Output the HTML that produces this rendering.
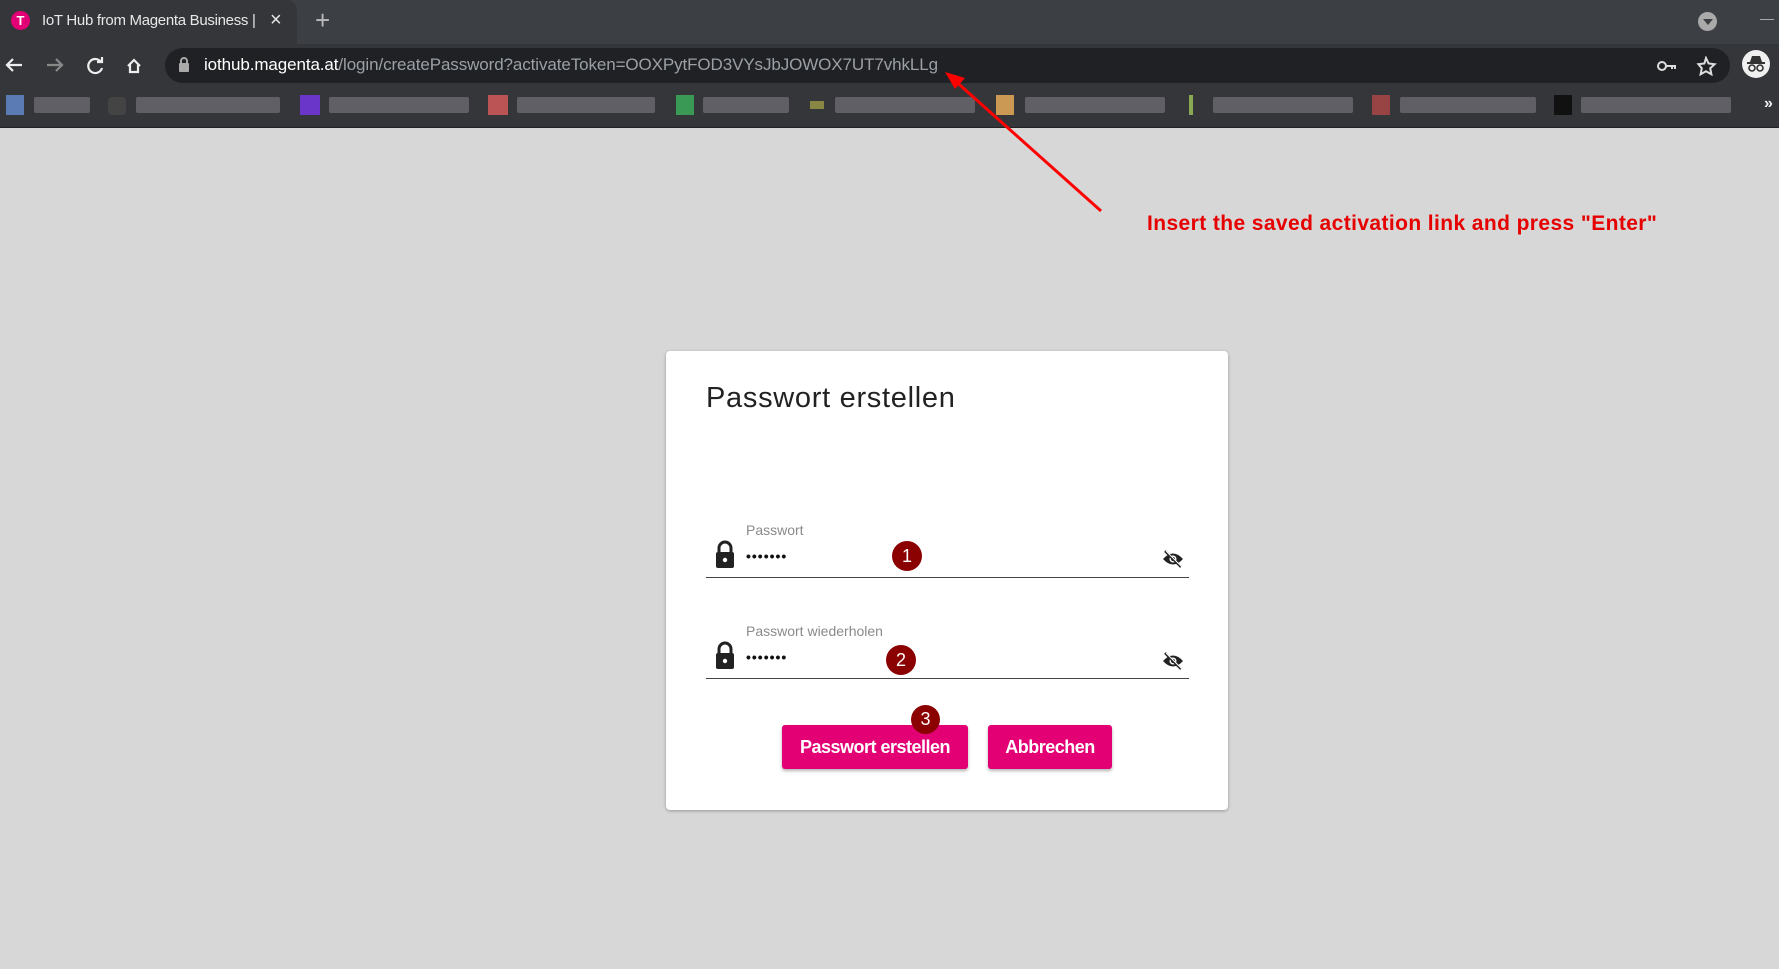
<!DOCTYPE html>
<html><head><meta charset="utf-8"><style>
*{margin:0;padding:0;box-sizing:border-box}
body{width:1779px;height:969px;background:#d7d7d7;font-family:"Liberation Sans",sans-serif;position:relative;overflow:hidden}
.abs{position:absolute}
.frame{left:0;top:0;width:1779px;height:44px;background:#3c3f43}
.tab{left:0;top:0;width:297px;height:44px;background:#35363a;border-radius:0 10px 0 0}
.toolbar{left:0;top:44px;width:1779px;height:84px;background:#35363a;border-bottom:1px solid #222}
.omni{left:165px;top:48px;width:1565px;height:35px;background:#202124;border-radius:18px}
.bm{top:97px;height:16px;background:#6a6a70;opacity:.8;border-radius:2px}
.card{left:666px;top:351px;width:562px;height:459px;background:#fff;border-radius:4px;box-shadow:0 1px 3px rgba(0,0,0,.3)}
.lbl{color:#8a8a8a;font-size:14px}
.dots{font-size:14px;color:#111;letter-spacing:1px;font-weight:bold}
.line{left:706px;width:483px;height:1px;background:#444}
.badge{width:30px;height:30px;border-radius:50%;background:#8b0000;color:#fff;font-size:18px;text-align:center;line-height:30px}
.btn{top:725px;height:44px;background:#e20074;color:#fff;font-weight:bold;font-size:18px;text-align:center;line-height:44px;border-radius:3px;box-shadow:0 2px 3px rgba(0,0,0,.3);letter-spacing:-.5px}
</style></head><body>
<div class="abs frame"></div>
<div class="abs tab"></div>
<div class="abs" style="left:11px;top:11px;width:19px;height:19px;border-radius:50%;background:#e20074;color:#fff;font-size:13px;text-align:center;line-height:19px;font-weight:bold">T</div>
<div class="abs" style="left:42px;top:12px;color:#e8e8e8;font-size:15px;white-space:nowrap;width:215px;overflow:hidden;letter-spacing:-.3px">IoT Hub from Magenta Business |</div>
<div class="abs" style="left:270px;top:9px;color:#e8e8e8;font-size:20px">×</div>
<div class="abs" style="left:315px;top:5px;color:#bbb;font-size:26px">+</div>
<div class="abs" style="left:1698px;top:12px;width:19px;height:19px;border-radius:50%;background:#aaa"></div>
<div class="abs" style="left:1703px;top:19px;width:0;height:0;border-left:5px solid transparent;border-right:5px solid transparent;border-top:6px solid #3c3f43"></div>
<div class="abs" style="left:1760px;top:19px;width:14px;height:1px;background:#aaa"></div>
<div class="abs toolbar"></div>
<svg class="abs" style="left:0;top:50px" width="160" height="32" viewBox="0 0 160 32" fill="none" stroke-width="2.2">
<path d="M22 15H7M13 9l-6 6 6 6" stroke="#eee"/>
<path d="M47 15h15M56 9l6 6-6 6" stroke="#888"/>
<path d="M101 12a7 7 0 1 0 1 6M102 7v5h-5" stroke="#eee"/>
<path d="M128 16l6-6 6 6M130 14v8h8v-8" stroke="#eee"/>
</svg>
<div class="abs omni"></div>
<svg class="abs" style="left:178px;top:57px" width="12" height="16"><rect x="1" y="6" width="10" height="9" rx="1" fill="#aaa"/><path d="M3 7V4a3 3 0 0 1 6 0v3" stroke="#aaa" stroke-width="2" fill="none"/></svg>
<div class="abs" style="left:204px;top:55px;font-size:17px;white-space:nowrap;color:#9aa0a6;letter-spacing:-.1px"><span style="color:#fff">iothub.magenta.at</span>/login/createPassword?activateToken=OOXPytFOD3VYsJbJOWOX7UT7vhkLLg</div>
<svg class="abs" style="left:1655px;top:56px" width="70" height="20" fill="none" stroke="#ddd" stroke-width="2"><circle cx="7" cy="10" r="4"/><path d="M11 10h10M17 10v3M20 10v3"/><path d="M51 2l2.6 5.5 6 .7-4.4 4.1 1.2 6-5.4-3-5.4 3 1.2-6L43.4 8.2l6-.7z"/></svg>
<div class="abs" style="left:1742px;top:50px;width:28px;height:28px;border-radius:50%;background:#f0f0f0"></div>
<svg class="abs" style="left:1745px;top:54px" width="22" height="20"><path d="M5 8l2-6h8l2 6z" fill="#333"/><rect x="2" y="8" width="18" height="2" fill="#333"/><circle cx="7" cy="14" r="3" fill="none" stroke="#333" stroke-width="1.6"/><circle cx="15" cy="14" r="3" fill="none" stroke="#333" stroke-width="1.6"/></svg>
<div class="abs" style="left:6px;top:95px;width:18px;height:20px;background:#5b7bb5"></div>
<div class="abs bm" style="left:34px;width:56px"></div>
<div class="abs" style="left:108px;top:97px;width:18px;height:18px;background:#444;border-radius:4px"></div>
<div class="abs bm" style="left:136px;width:144px"></div>
<div class="abs" style="left:300px;top:95px;width:20px;height:20px;background:#6a35c9"></div>
<div class="abs bm" style="left:329px;width:140px"></div>
<div class="abs" style="left:488px;top:95px;width:20px;height:20px;background:#b55"></div>
<div class="abs bm" style="left:517px;width:138px"></div>
<div class="abs" style="left:676px;top:95px;width:18px;height:20px;background:#3a9a55"></div>
<div class="abs bm" style="left:703px;width:86px"></div>
<div class="abs" style="left:810px;top:101px;width:14px;height:8px;background:#884"></div>
<div class="abs bm" style="left:835px;width:140px"></div>
<div class="abs" style="left:996px;top:95px;width:18px;height:20px;background:#c95"></div>
<div class="abs bm" style="left:1025px;width:140px"></div>
<div class="abs" style="left:1189px;top:95px;width:4px;height:20px;background:#8a5"></div>
<div class="abs bm" style="left:1213px;width:140px"></div>
<div class="abs" style="left:1372px;top:95px;width:18px;height:20px;background:#944"></div>
<div class="abs bm" style="left:1400px;width:136px"></div>
<div class="abs" style="left:1554px;top:95px;width:18px;height:20px;background:#111"></div>
<div class="abs bm" style="left:1581px;width:150px"></div>
<div class="abs" style="left:1764px;top:95px;color:#eee;font-size:16px;font-weight:bold">»</div>
<div class="abs" style="left:1147px;top:212px;color:#e60000;font-weight:bold;font-size:21px;white-space:nowrap;letter-spacing:.4px">Insert the saved activation link and press "Enter"</div>
<svg class="abs" style="left:0;top:0" width="1779" height="969"><path d="M1101 211L952 78" stroke="#f00" stroke-width="3"/><path d="M945 72l20 6-10 11z" fill="#f00"/></svg>
<div class="abs card"></div>
<div class="abs" style="left:706px;top:382px;font-size:29px;color:#222;letter-spacing:.7px">Passwort erstellen</div>
<div class="abs lbl" style="left:746px;top:522px">Passwort</div>
<div class="abs dots" style="left:746px;top:548px">•••••••</div>
<div class="abs line" style="top:577px"></div>
<div class="abs lbl" style="left:746px;top:623px">Passwort wiederholen</div>
<div class="abs dots" style="left:746px;top:649px">•••••••</div>
<div class="abs line" style="top:678px"></div>
<svg class="abs" style="left:713px;top:540px" width="24" height="30"><path d="M6 12V8a6 6 0 0 1 12 0v4" stroke="#222" stroke-width="3" fill="none"/><rect x="3" y="12" width="18" height="16" rx="2" fill="#222"/><circle cx="12" cy="20" r="2.2" fill="#fff"/></svg>
<svg class="abs" style="left:713px;top:641px" width="24" height="30"><path d="M6 12V8a6 6 0 0 1 12 0v4" stroke="#222" stroke-width="3" fill="none"/><rect x="3" y="12" width="18" height="16" rx="2" fill="#222"/><circle cx="12" cy="20" r="2.2" fill="#fff"/></svg>
<svg class="abs" style="left:1162px;top:550px" width="22" height="18"><path d="M1 9q10-11 20 0q-10 11-20 0z" fill="#222"/><circle cx="11" cy="9" r="3.5" fill="#fff"/><circle cx="11" cy="9" r="2" fill="#222"/><path d="M3 1l16 16" stroke="#222" stroke-width="2.5"/><path d="M4 1l16 16" stroke="#fff" stroke-width="1"/></svg>
<svg class="abs" style="left:1162px;top:652px" width="22" height="18"><path d="M1 9q10-11 20 0q-10 11-20 0z" fill="#222"/><circle cx="11" cy="9" r="3.5" fill="#fff"/><circle cx="11" cy="9" r="2" fill="#222"/><path d="M3 1l16 16" stroke="#222" stroke-width="2.5"/><path d="M4 1l16 16" stroke="#fff" stroke-width="1"/></svg>
<div class="abs btn" style="left:782px;width:186px">Passwort erstellen</div>
<div class="abs btn" style="left:988px;width:124px">Abbrechen</div>
<div class="abs badge" style="left:892px;top:541px">1</div>
<div class="abs badge" style="left:886px;top:645px">2</div>
<div class="abs badge" style="left:911px;top:705px;width:29px;height:29px;line-height:29px">3</div>
</body></html>
